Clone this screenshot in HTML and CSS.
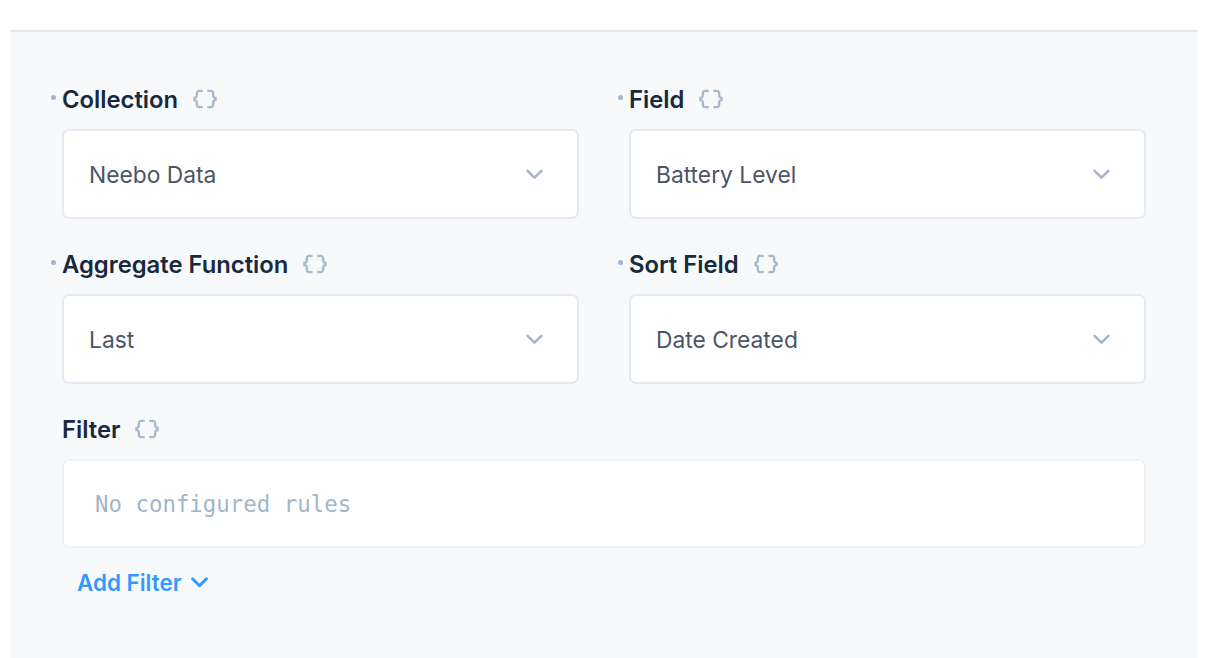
FILE: index.html
```html
<!DOCTYPE html>
<html>
<head>
<meta charset="utf-8">
<link rel="stylesheet" href="styles.css">
</head>
<body>
<div class="panel">
  <div class="grid">
    <div class="field">
      <div class="label required"><span class="label-text">Collection</span>
        <svg class="braces" viewBox="0 0 24 24"><path d="M4 7v2c0 .55-.45 1-1 1H2v4h1c.55 0 1 .45 1 1v2c0 1.65 1.35 3 3 3h3v-2H7c-.55 0-1-.45-1-1v-2c0-1.3-.84-2.42-2-2.83v-.34C5.16 11.42 6 10.3 6 9V7c0-.55.45-1 1-1h3V4H7C5.35 4 4 5.35 4 7zm17 3c-.55 0-1-.45-1-1V7c0-1.65-1.35-3-3-3h-3v2h3c.55 0 1 .45 1 1v2c0 1.3.84 2.42 2 2.83v.34c-1.16.41-2 1.52-2 2.83v2c0 .55-.45 1-1 1h-3v2h3c1.65 0 3-1.35 3-3v-2c0-.55.45-1 1-1h1v-4h-1z"/></svg>
      </div>
      <div class="select"><span>Neebo Data</span>
        <svg class="chev" viewBox="0 0 16 10"><polyline points="1.5,1.5 8,8 14.5,1.5"/></svg>
      </div>
    </div>
    <div class="field">
      <div class="label required"><span class="label-text">Field</span>
        <svg class="braces" viewBox="0 0 24 24"><path d="M4 7v2c0 .55-.45 1-1 1H2v4h1c.55 0 1 .45 1 1v2c0 1.65 1.35 3 3 3h3v-2H7c-.55 0-1-.45-1-1v-2c0-1.3-.84-2.42-2-2.83v-.34C5.16 11.42 6 10.3 6 9V7c0-.55.45-1 1-1h3V4H7C5.35 4 4 5.35 4 7zm17 3c-.55 0-1-.45-1-1V7c0-1.65-1.35-3-3-3h-3v2h3c.55 0 1 .45 1 1v2c0 1.3.84 2.42 2 2.83v.34c-1.16.41-2 1.52-2 2.83v2c0 .55-.45 1-1 1h-3v2h3c1.65 0 3-1.35 3-3v-2c0-.55.45-1 1-1h1v-4h-1z"/></svg>
      </div>
      <div class="select"><span>Battery Level</span>
        <svg class="chev" viewBox="0 0 16 10"><polyline points="1.5,1.5 8,8 14.5,1.5"/></svg>
      </div>
    </div>
    <div class="field">
      <div class="label required"><span class="label-text">Aggregate Function</span>
        <svg class="braces" viewBox="0 0 24 24"><path d="M4 7v2c0 .55-.45 1-1 1H2v4h1c.55 0 1 .45 1 1v2c0 1.65 1.35 3 3 3h3v-2H7c-.55 0-1-.45-1-1v-2c0-1.3-.84-2.42-2-2.83v-.34C5.16 11.42 6 10.3 6 9V7c0-.55.45-1 1-1h3V4H7C5.35 4 4 5.35 4 7zm17 3c-.55 0-1-.45-1-1V7c0-1.65-1.35-3-3-3h-3v2h3c.55 0 1 .45 1 1v2c0 1.3.84 2.42 2 2.83v.34c-1.16.41-2 1.52-2 2.83v2c0 .55-.45 1-1 1h-3v2h3c1.65 0 3-1.35 3-3v-2c0-.55.45-1 1-1h1v-4h-1z"/></svg>
      </div>
      <div class="select"><span>Last</span>
        <svg class="chev" viewBox="0 0 16 10"><polyline points="1.5,1.5 8,8 14.5,1.5"/></svg>
      </div>
    </div>
    <div class="field">
      <div class="label required"><span class="label-text">Sort Field</span>
        <svg class="braces" viewBox="0 0 24 24"><path d="M4 7v2c0 .55-.45 1-1 1H2v4h1c.55 0 1 .45 1 1v2c0 1.65 1.35 3 3 3h3v-2H7c-.55 0-1-.45-1-1v-2c0-1.3-.84-2.42-2-2.83v-.34C5.16 11.42 6 10.3 6 9V7c0-.55.45-1 1-1h3V4H7C5.35 4 4 5.35 4 7zm17 3c-.55 0-1-.45-1-1V7c0-1.65-1.35-3-3-3h-3v2h3c.55 0 1 .45 1 1v2c0 1.3.84 2.42 2 2.83v.34c-1.16.41-2 1.52-2 2.83v2c0 .55-.45 1-1 1h-3v2h3c1.65 0 3-1.35 3-3v-2c0-.55.45-1 1-1h1v-4h-1z"/></svg>
      </div>
      <div class="select"><span>Date Created</span>
        <svg class="chev" viewBox="0 0 16 10"><polyline points="1.5,1.5 8,8 14.5,1.5"/></svg>
      </div>
    </div>
    <div class="field full">
      <div class="label"><span class="label-text">Filter</span>
        <svg class="braces" viewBox="0 0 24 24"><path d="M4 7v2c0 .55-.45 1-1 1H2v4h1c.55 0 1 .45 1 1v2c0 1.65 1.35 3 3 3h3v-2H7c-.55 0-1-.45-1-1v-2c0-1.3-.84-2.42-2-2.83v-.34C5.16 11.42 6 10.3 6 9V7c0-.55.45-1 1-1h3V4H7C5.35 4 4 5.35 4 7zm17 3c-.55 0-1-.45-1-1V7c0-1.65-1.35-3-3-3h-3v2h3c.55 0 1 .45 1 1v2c0 1.3.84 2.42 2 2.83v.34c-1.16.41-2 1.52-2 2.83v2c0 .55-.45 1-1 1h-3v2h3c1.65 0 3-1.35 3-3v-2c0-.55.45-1 1-1h1v-4h-1z"/></svg>
      </div>
      <div class="filter-box"><span>No configured rules</span></div>
      <div class="add-filter"><span>Add Filter</span>
        <svg class="chev-blue" viewBox="0 0 16 10"><polyline points="1.5,1.5 8,8 14.5,1.5"/></svg>
      </div>
    </div>
  </div>
</div>
</body>
</html>
```

FILE: styles.css
```css
html, body {
  margin: 0;
  padding: 0;
  background: #ffffff;
}
body {
  font-family: Inter, "Noto Sans", sans-serif;
  height: 658px;
  overflow: hidden;
}
.panel {
  margin: 30px 0 0 10px;
  width: 1188px;
  height: 628px;
  box-sizing: border-box;
  border-top: 2px solid #e2e8f0;
  background: #f7f9fb;
  padding: 54px 52px 0 52px;
}
.grid {
  display: grid;
  grid-template-columns: 517px 517px;
  column-gap: 50px;
  row-gap: 32px;
}
.field.full {
  grid-column: 1 / span 2;
}
.label {
  position: relative;
  display: flex;
  align-items: center;
  height: 26px;
  line-height: 26px;
  margin-bottom: 17px;
  font-size: 23.8px;
  font-weight: 600;
  color: #172940;
}
.label-text {
  position: relative;
  top: 1px;
}
.label.required::before {
  content: "";
  position: absolute;
  left: -11px;
  top: 9px;
  width: 5px;
  height: 5px;
  border-radius: 50%;
  background: #a2b5cd;
}
.braces {
  width: 28px;
  height: 28px;
  margin-left: 13px;
  fill: #a7b8ce;
}
.select {
  height: 90px;
  box-sizing: border-box;
  background: #ffffff;
  border: 2px solid #e4eaf2;
  border-radius: 7px;
  display: flex;
  align-items: center;
  justify-content: space-between;
  padding: 0 34px 0 25px;
  font-size: 22.8px;
  color: #4b5567;
}
.chev {
  width: 17px;
  height: 11px;
  fill: none;
  stroke: #a2b5cd;
  stroke-width: 2.4;
  stroke-linecap: round;
  stroke-linejoin: round;
}
.filter-box {
  height: 89px;
  box-sizing: border-box;
  background: #ffffff;
  border: 2px solid #eef1f6;
  border-radius: 7px;
  display: flex;
  align-items: center;
  padding: 0 31px;
  font-family: "DejaVu Sans Mono", "Liberation Mono", monospace;
  font-size: 22.4px;
  color: #a2b5cd;
}
.add-filter {
  display: flex;
  align-items: center;
  gap: 9px;
  margin: 21px 0 0 15px;
  height: 26px;
  font-size: 22.4px;
  font-weight: 600;
  color: #3399ff;
}
.chev-blue {
  width: 17px;
  height: 11px;
  fill: none;
  stroke: #3399ff;
  stroke-width: 2.8;
  stroke-linecap: round;
  stroke-linejoin: round;
}
```
